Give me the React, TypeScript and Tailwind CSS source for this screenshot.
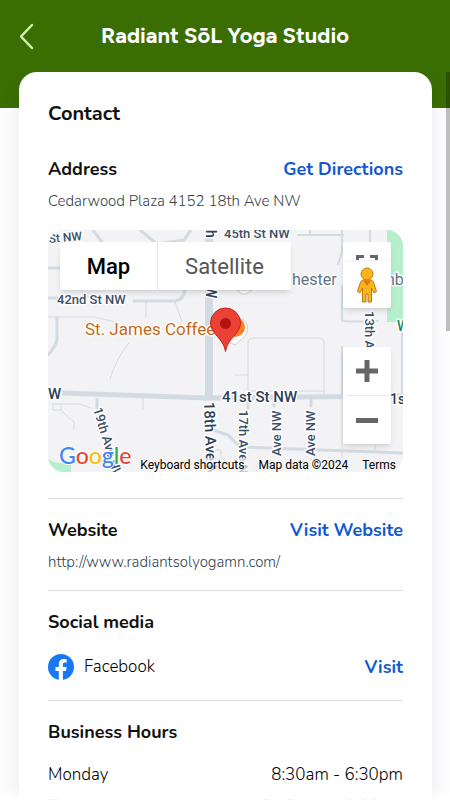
import type { ReactNode } from "react";

const hours = [
  { day: "Monday", time: "8:30am - 6:30pm" },
  { day: "Tuesday", time: "5:45am - 12:30pm" },
];

function MapArtwork() {
  return (
    <svg
      className="block h-full w-full"
      viewBox="0 0 355 242"
      preserveAspectRatio="xMidYMid slice"
      role="img"
      aria-label="Map of 18th Ave NW"
    >
      <rect width="355" height="242" fill="#f3f2f4" />
      <path d="M339 0h16v92h-16z" fill="#b6efcb" />
      <path d="M0 229q6 4 13 4h10v9H0z" fill="#b6efcb" />
      <g fill="none" stroke="#d3dbe2" strokeLinecap="round" strokeLinejoin="round">
        <path d="M161 0V166" strokeWidth="8" strokeLinecap="butt" />
        <path d="M14 163L160 168L355 166" strokeWidth="5" strokeLinecap="butt" />
        <path d="M0 38H22M0 68H12M86 71H127Q136 70 137 59M45 0L56 15M92 0L109 14L136 10L143 0M135 71" strokeWidth="3" />
        <path d="M98 72V88M127 72L134 91M-2 87H47L67 92M81 113C72 124 66 136 62 149M95 169V179M5 174H32L43 178M5 174V180H13V174M13 180L20 187L26 192V200" strokeWidth="1" />
        <path d="M9 88V108Q9 115 0 125M49 169V179" strokeWidth="3" />
        <path d="M250 5H295M262 0V5M294 0V23L290 34" strokeWidth="2" />
        <path d="M294 56V91Q312 92 330 91M294 117V166M322 0V18M354 100V166" strokeWidth="2" />
        <path d="M294 166V242M200 166V112Q200 108 206 108H270Q276 108 276 113V166M187 145H200M200 161H276M327 215V222" strokeWidth="1" />
        <path d="M165 200L180 205L192 217L355 223M226 167V176M263 167V176M200 169V178" strokeWidth="3" />
        <path d="M167 220H173V227" strokeWidth="1" />
      </g>
      <path d="M189 60l5 4q3 1 6-1l4-3z" fill="#fff" stroke="#cbd0d5" />
      <g
        fontFamily="Roboto, sans-serif"
        fontWeight="500"
        fill="#3d5068"
        stroke="#fff"
        strokeWidth="3"
        strokeLinejoin="round"
        paintOrder="stroke"
      >
        <text x="1" y="13" fontSize="12" transform="rotate(-5 1 13)">St NW</text>
        <text x="9" y="74" fontSize="13">42nd St NW</text>
        <text x="176" y="8" fontSize="13">45th St NW</text>
        <g fill="#2c4058">
          <text x="174" y="172" fontSize="15">41st St NW</text>
          <text x="0" y="169" fontSize="15">W</text>
          <text x="342" y="174" fontSize="14">1s</text>
          <text transform="translate(156 172) rotate(88)" fontSize="15">18th Ave N</text>
          <text transform="translate(158 0) rotate(90)" fontSize="14">h</text>
          <text transform="translate(158 56) rotate(90)" fontSize="14">W</text>
        </g>
        <text transform="translate(45 179) rotate(73)" fontSize="13">19th Ave NW</text>
        <text transform="translate(191 180) rotate(90)" fontSize="13">17th Ave N</text>
        <text transform="translate(233 226) rotate(-90)" fontSize="13">Ave NW</text>
        <text transform="translate(267 226) rotate(-90)" fontSize="13">Ave NW</text>
        <text transform="translate(317 81) rotate(90)" fontSize="13">13th A</text>
        <text x="349" y="101" fontSize="14" fill="#178a62">W</text>
        <text x="244" y="55" fontSize="16" fontWeight="400" fill="#607487">hester</text>
        <text x="338" y="55" fontSize="16" fontWeight="400" fill="#607487">nb</text>
        <text x="37" y="105" fontSize="17" fontWeight="400" fill="#c96718">St. James Coffee</text>
      </g>
      <path d="M176 110L187 115L195 108A12 12 0 0 0 196 90L187 86z" fill="#fff" stroke="#ccd0d4" />
      <circle cx="187" cy="97" r="10" fill="#f58220" />
      <path
        d="M177.500 121.500C175.500 108 162.500 104 162.500 93a15 15 0 0 1 30 0C192.500 104 179.500 108 177.500 121.500z"
        fill="#ea4335"
        stroke="#c5221f"
        strokeWidth="1"
      />
      <circle cx="177.500" cy="93.500" r="5.500" fill="#b31412" />
      <text
        x="11"
        y="234"
        fontFamily="Lato, sans-serif"
        fontSize="23"
        fontWeight="500"
        stroke="#fff"
        strokeWidth="2"
        paintOrder="stroke"
      >
        <tspan fill="#4285f4">G</tspan><tspan fill="#ea4335">o</tspan><tspan fill="#fbbc05">o</tspan><tspan fill="#4285f4">g</tspan><tspan fill="#34a853">l</tspan><tspan fill="#ea4335">e</tspan>
      </text>
    </svg>
  );
}

function Pegman() {
  return (
    <svg width="22" height="36" viewBox="0 0 22 36" aria-hidden="true">
      <g fill="#fbb41a" stroke="#b87d1c" strokeWidth="1" strokeLinejoin="round">
        <path d="M6.500 13h9l2 2 3 9.500-2.500 1.500-2.500-5v14h-3.500v-8h-2v8H6.500V21L4 26l-2.500-1.500 3-9.500z" />
        <circle cx="11" cy="7" r="6" />
      </g>
      <path d="M7 13.500h8l-4 5.500z" fill="#e5770d" />
    </svg>
  );
}

function StudioMap() {
  return (
    <div className="relative mt-[17px] h-[242px] overflow-hidden rounded-2xl font-[Roboto,sans-serif]">
      <MapArtwork />
      <div className="absolute top-3 left-3 flex h-12 rounded-xs bg-white text-[22px] shadow-md">
        <button type="button" className="w-[98px] border-r border-gray-200 font-medium text-black">
          Map
        </button>
        <button type="button" className="w-[133px] text-[#565656]">
          Satellite
        </button>
      </div>
      <div className="absolute top-3 right-3 flex w-12 flex-col rounded-xs bg-white shadow-md">
        <button type="button" aria-label="Toggle fullscreen view" className="flex h-[18px] items-end justify-center">
          <svg width="22" height="5" viewBox="0 0 22 5" fill="none" stroke="#666" strokeWidth="3" aria-hidden="true">
            <path d="M1.500 5V1.500H8M14 1.500h6.500V5" />
          </svg>
        </button>
        <button
          type="button"
          aria-label="Street View"
          className="flex h-12 items-center justify-center border-t border-gray-100"
        >
          <Pegman />
        </button>
      </div>
      <div className="absolute right-3 bottom-7 flex w-12 flex-col rounded-xs bg-white shadow-md">
        <button type="button" aria-label="Zoom in" className="flex h-12 items-center justify-center">
          <svg width="22" height="22" viewBox="0 0 22 22" stroke="#666" strokeWidth="5" aria-hidden="true">
            <path d="M0 11h22M11 0v22" />
          </svg>
        </button>
        <span className="mx-1 h-px bg-gray-200" />
        <button type="button" aria-label="Zoom out" className="flex h-12 items-center justify-center">
          <svg width="22" height="5" viewBox="0 0 22 5" fill="#666" aria-hidden="true">
            <path d="M0 0h22v5H0z" />
          </svg>
        </button>
      </div>
      <div className="absolute right-0 bottom-0 flex h-[14px] items-center text-xs leading-[14px] whitespace-nowrap text-black">
        <button type="button" className="bg-[#f5f5f5]/70 px-[7px]">
          Keyboard shortcuts
        </button>
        <span className="bg-[#f5f5f5]/70 px-[7px]">Map data ©2024</span>
        <a href="#terms" className="bg-[#f5f5f5]/70 px-[7px]">
          Terms
        </a>
      </div>
    </div>
  );
}

function RowHeading({ title, children }: { title: string; children?: ReactNode }) {
  return (
    <div className="flex items-center justify-between text-lg leading-6">
      <h3 className="font-bold text-[#111]">{title}</h3>
      {children}
    </div>
  );
}

function ActionLink({ href, children }: { href: string; children: ReactNode }) {
  return (
    <a href={href} className="text-lg leading-6 font-bold text-[#1358d0]">
      {children}
    </a>
  );
}

export default function App() {
  return (
    <div className="relative flex h-screen flex-col overflow-hidden bg-[#fdfdfe] font-['Nunito','Open_Sans',sans-serif]">
      <header className="flex h-27 shrink-0 items-start bg-[#3a6e03] px-4 text-white">
        <button type="button" aria-label="Back" className="flex h-18 w-8 items-center">
          <svg width="20" height="28" viewBox="0 0 20 28" fill="none" stroke="#d3efb8" strokeWidth="2.500" strokeLinecap="round" strokeLinejoin="round" aria-hidden="true">
            <path d="M16 3L5 14.500L16 26" />
          </svg>
        </button>
        <h1 className="flex-1 pr-8 text-center font-['Figtree','Red_Hat_Display','Inter',sans-serif] text-[22px] leading-[72px] font-bold">
          Radiant SōL Yoga Studio
        </h1>
      </header>

      <main className="-mt-9 min-h-0 flex-1 overflow-y-auto pr-[18px] pl-[19px] [scrollbar-width:none]">
        <div className="rounded-t-[18px] bg-white px-[29px] pt-[30px] pb-8 shadow-[0_8px_20px_rgba(30,30,80,0.08)]">
          <h2 className="text-xl leading-6 font-bold text-[#111]">Contact</h2>

          <section className="mt-[31px] border-b border-[#dedede] pb-[26px]">
            <RowHeading title="Address">
              <ActionLink href="#directions">Get Directions</ActionLink>
            </RowHeading>
            <p className="mt-2 text-[15px] leading-6 font-light text-[#2f444e]">Cedarwood Plaza 4152 18th Ave NW</p>
            <StudioMap />
          </section>

          <section className="border-b border-[#dedede] pt-[19px] pb-4">
            <RowHeading title="Website">
              <ActionLink href="#website">Visit Website</ActionLink>
            </RowHeading>
            <p className="mt-2 text-[15px] leading-6 font-light text-[#2f444e]">http://www.radiantsolyogamn.com/</p>
          </section>

          <section className="border-b border-[#dedede] pt-[19px] pb-5">
            <RowHeading title="Social media" />
            <div className="mt-5 flex items-center">
              <svg width="26" height="26" viewBox="0 0 26 26" aria-hidden="true">
                <circle cx="13" cy="13" r="13" fill="#1877f2" />
                <path d="M10.800 26v-9.100H7.500V13h3.300v-2.800c0-3.300 2-5.100 5-5.100 1.400 0 2.900.25 2.900.25v3.200h-1.700c-1.600 0-2.100 1-2.100 2V13h3.700l-.6 3.900h-3.100V26z" fill="#fff" />
              </svg>
              <span className="flex-1 pl-2.5 text-[17px] leading-6 font-light text-black">Facebook</span>
              <ActionLink href="#facebook">Visit</ActionLink>
            </div>
          </section>

          <section className="pt-[19px]">
            <RowHeading title="Business Hours" />
            <dl className="mt-[19px] flex flex-col gap-2 text-[17px] leading-6 font-light text-black">
              {hours.map((entry) => (
                <div key={entry.day} className="flex justify-between">
                  <dt>{entry.day}</dt>
                  <dd>{entry.time}</dd>
                </div>
              ))}
            </dl>
          </section>
        </div>
      </main>

      <div className="pointer-events-none absolute inset-x-0 bottom-0 h-3 bg-linear-to-b from-white/0 to-white" />
      <div className="absolute top-18 right-0 h-[259px] w-1 bg-black/25" />
    </div>
  );
}
